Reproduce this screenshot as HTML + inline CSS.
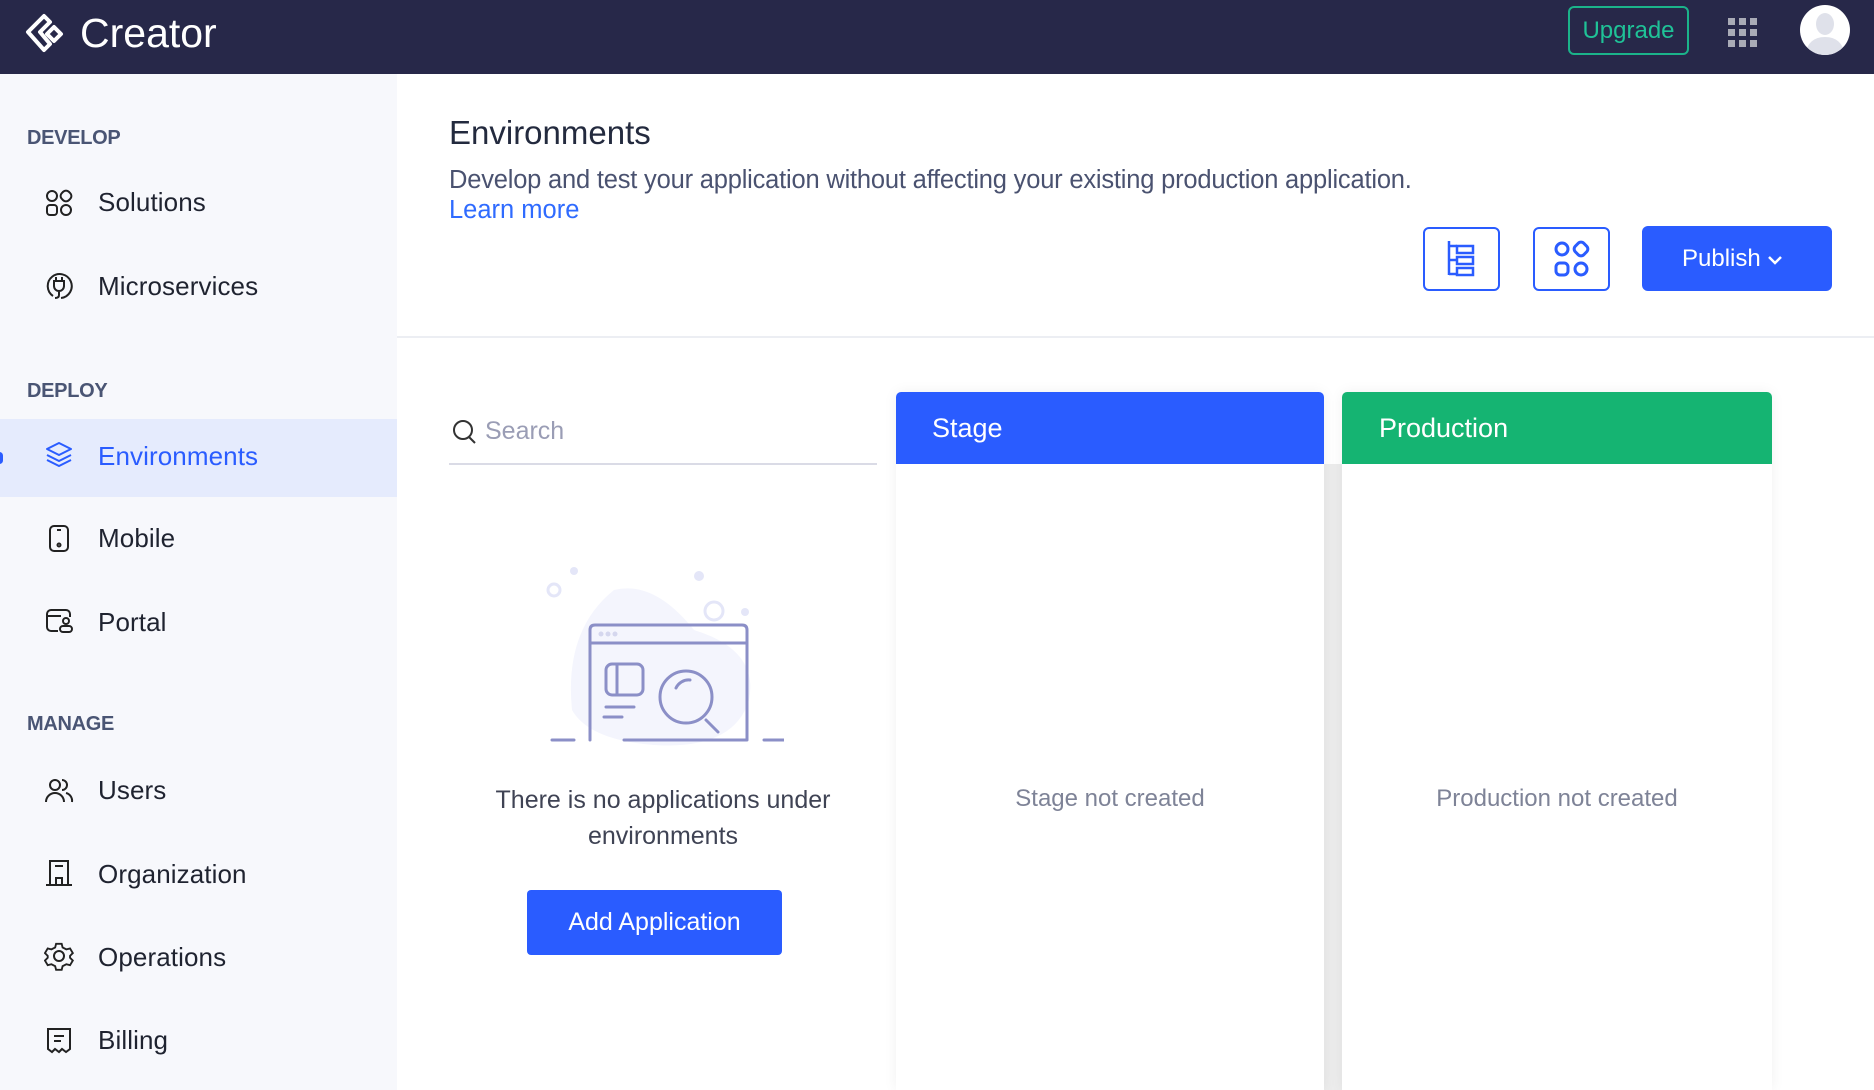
<!DOCTYPE html>
<html><head><meta charset="utf-8">
<style>
*{margin:0;padding:0;box-sizing:border-box}
body{width:1874px;height:1090px;overflow:hidden;background:#fff;font-family:"Liberation Sans",sans-serif;position:relative}
.a{position:absolute}
.hdr{left:0;top:0;width:1874px;height:74px;background:#272849}
.side{left:0;top:74px;width:397px;height:1016px;background:#f7f8fc}
.sec{left:27px;font-size:20px;font-weight:bold;color:#4a5574;letter-spacing:-0.3px}
.it{left:98px;font-size:26px;color:#1f2330;letter-spacing:0.1px}
.ic{left:44px;width:30px;height:30px}
</style></head><body>
<div class="a hdr"></div>
<svg class="a" style="left:24px;top:12px" width="48" height="44" viewBox="0 0 48 44" fill="none" stroke="#fff" stroke-width="4" stroke-linejoin="round"><path d="M20 4 L4 20 L20 38 L26 32 L16 20 L26 10 Z"/><path d="M30 15 L37 22 L30 29 L23 22 Z"/></svg>
<div class="a" style="left:80px;top:10px;font-size:41px;color:#fff">Creator</div>
<div class="a" style="left:1568px;top:6px;width:121px;height:49px;border:2px solid #1bb38a;border-radius:6px;color:#1fc297;font-size:24px;text-align:center;line-height:45px">Upgrade</div>
<svg class="a" style="left:1728px;top:18px" width="29" height="29" viewBox="0 0 29 29" fill="#a9abb6"><rect x="0" y="0" width="7" height="7"/><rect x="11" y="0" width="7" height="7"/><rect x="22" y="0" width="7" height="7"/><rect x="0" y="11" width="7" height="7"/><rect x="11" y="11" width="7" height="7"/><rect x="22" y="11" width="7" height="7"/><rect x="0" y="22" width="7" height="7"/><rect x="11" y="22" width="7" height="7"/><rect x="22" y="22" width="7" height="7"/></svg>
<svg class="a" style="left:1800px;top:5px" width="50" height="50" viewBox="0 0 50 50"><circle cx="25" cy="25" r="25" fill="#fff"/><clipPath id="c"><circle cx="25" cy="25" r="25"/></clipPath><g clip-path="url(#c)" fill="#dfe1ea"><ellipse cx="25" cy="19" rx="9" ry="11"/><path d="M5 50 Q8 32 25 32 Q42 32 45 50Z"/></g></svg>

<div class="a side"></div>
<div class="a" style="left:0;top:419px;width:397px;height:78px;background:#e5ebfd"></div>
<div class="a" style="left:-4px;top:452px;width:7px;height:12px;border-radius:4px;background:#2a5cff"></div>
<div class="a sec" style="top:127px">DEVELOP</div>
<div class="a sec" style="top:380px">DEPLOY</div>
<div class="a sec" style="top:713px">MANAGE</div>
<div class="a it" style="top:187px">Solutions</div>
<div class="a it" style="top:271px">Microservices</div>
<div class="a it" style="top:441px;color:#2a5cff">Environments</div>
<div class="a it" style="top:523px">Mobile</div>
<div class="a it" style="top:607px">Portal</div>
<div class="a it" style="top:775px">Users</div>
<div class="a it" style="top:859px">Organization</div>
<div class="a it" style="top:942px">Operations</div>
<div class="a it" style="top:1025px">Billing</div>
<svg class="a ic" style="top:188px" viewBox="0 0 30 30" fill="none" stroke="#222" stroke-width="2"><circle cx="8" cy="8" r="5"/><rect x="17" y="3" width="10" height="10" rx="4" transform="rotate(45 22 8)"/><rect x="3" y="17" width="10" height="10" rx="3"/><circle cx="22" cy="22" r="5"/></svg>
<svg class="a ic" style="top:271px" viewBox="0 0 30 30" fill="none" stroke="#222" stroke-width="2"><path d="M17 27 A12 12 0 1 0 9 25"/><path d="M10 10v5a5 5 0 0 0 10 0v-5zM12 10V6M18 10V6M15 20v4q0 3-4 3"/></svg>
<svg class="a ic" style="top:440px" viewBox="0 0 30 30" fill="none" stroke="#2a5cff" stroke-width="2" stroke-linejoin="round"><path d="M15 3 L27 9 L15 15 L3 9 Z"/><path d="M3 15 L15 21 L27 15"/><path d="M3 20 L15 26 L27 20"/></svg>
<svg class="a ic" style="top:523px" viewBox="0 0 30 30" fill="none" stroke="#222" stroke-width="2"><rect x="6" y="3" width="18" height="25" rx="4"/><path d="M13 7h4"/><circle cx="15" cy="22" r="1.5"/></svg>
<svg class="a ic" style="top:606px" viewBox="0 0 30 30" fill="none" stroke="#222" stroke-width="2"><path d="M14 25H7a4 4 0 0 1-4-4V8a4 4 0 0 1 4-4h15a4 4 0 0 1 4 4v3M3 10h14"/><circle cx="22" cy="15" r="3"/><rect x="16" y="20" width="12" height="6" rx="3"/></svg>
<svg class="a ic" style="top:775px" viewBox="0 0 30 30" fill="none" stroke="#222" stroke-width="2"><circle cx="11" cy="10" r="5"/><path d="M2 27a9 9 0 0 1 18 0"/><path d="M18 5a5 5 0 0 1 0 10M22 18a8 8 0 0 1 6 9"/></svg>
<svg class="a ic" style="top:858px" viewBox="0 0 30 30" fill="none" stroke="#222" stroke-width="2"><path d="M6 27V3h18v24M2 27h26M11 8h8M12 27v-7h6v7"/></svg>
<svg class="a ic" style="top:941px" viewBox="0 0 30 30" fill="none" stroke="#222" stroke-width="2"><path d="M12 3h6l1 4 4 2 4-1 3 5-3 3v2l3 3-3 5-4-1-4 2-1 4h-6l-1-4-4-2-4 1-3-5 3-3v-2l-3-3 3-5 4 1 4-2z" transform="scale(.93) translate(1 0)"/><circle cx="15" cy="15" r="5"/></svg>
<svg class="a ic" style="top:1025px" viewBox="0 0 30 30" fill="none" stroke="#222" stroke-width="2"><path d="M4 4h22v20l-4 3-4-3-3 3-4-3-3 3-4-3z"/><path d="M10 11h10M10 16h7"/></svg>

<div class="a" style="left:449px;top:114px;font-size:33px;color:#232a3e">Environments</div>
<div class="a" style="left:449px;top:166px;font-size:25.5px;color:#4a5270;letter-spacing:-0.2px">Develop and test your application without affecting your existing production application.</div>
<div class="a" style="left:449px;top:196px;font-size:25.5px;color:#2f6bff">Learn more</div>
<div class="a" style="left:1423px;top:227px;width:77px;height:64px;border:2px solid #2a5cff;border-radius:6px"></div>
<svg class="a" style="left:1446px;top:240px" width="32" height="38" viewBox="0 0 32 38" fill="none" stroke="#2a5cff" stroke-width="2.5"><path d="M3 1v34M3 6h8M3 20h8M3 34h8"/><rect x="11" y="6" width="16" height="7"/><rect x="11" y="17" width="16" height="7"/><rect x="11" y="28" width="16" height="7"/></svg>
<div class="a" style="left:1533px;top:227px;width:77px;height:64px;border:2px solid #2a5cff;border-radius:6px"></div>
<svg class="a" style="left:1553px;top:240px" width="38" height="38" viewBox="0 0 38 38" fill="none" stroke="#2a5cff" stroke-width="3"><circle cx="9" cy="9" r="6"/><rect x="22" y="3" width="12" height="12" rx="4" transform="rotate(45 28 9)"/><rect x="3" y="23" width="12" height="12" rx="4"/><circle cx="28" cy="29" r="6"/></svg>
<div class="a" style="left:1642px;top:226px;width:190px;height:65px;background:#2a5cff;border-radius:6px;color:#fff;font-size:24px;line-height:65px;padding-left:40px">Publish <svg width="16" height="12" viewBox="0 0 16 12" fill="none" stroke="#fff" stroke-width="2.5"><path d="M2 3l6 6 6-6"/></svg></div>
<div class="a" style="left:397px;top:336px;width:1477px;height:2px;background:#eceef3"></div>

<svg class="a" style="left:452px;top:419px" width="26" height="26" viewBox="0 0 26 26" fill="none" stroke="#333" stroke-width="2"><circle cx="11" cy="11" r="9"/><path d="M17 18l6 6"/></svg>
<div class="a" style="left:485px;top:417px;font-size:25px;color:#9a9db5">Search</div>
<div class="a" style="left:449px;top:463px;width:428px;height:2px;background:#dadbe6"></div>

<svg class="a" style="left:544px;top:560px" width="240" height="190" viewBox="0 0 240 190" fill="none">
<path d="M70 30 Q110 20 150 70 Q215 90 205 140 Q190 190 110 185 Q45 180 28 150 Q20 70 70 30Z" fill="#f4f5fd"/>
<circle cx="10" cy="30" r="6" stroke="#e4e6f8" stroke-width="3"/><circle cx="30" cy="11" r="4" fill="#e4e6f8"/><circle cx="155" cy="16" r="5" fill="#e4e6f8"/><circle cx="170" cy="51" r="9" stroke="#e4e6f8" stroke-width="3"/><circle cx="201" cy="52" r="4" fill="#e4e6f8"/>
<g stroke="#8b8fc7" stroke-width="3" stroke-linecap="round"><path d="M46 180V70q0-5 5-5h147q5 0 5 5v110M46 83h157M80 180h122M8 180h22M220 180h28"/><rect x="62" y="104" width="37" height="31" rx="6"/><path d="M73 104v31M62 147h28M60 157h18"/><circle cx="142" cy="137" r="26"/><path d="M132 128a14 14 0 0 1 14-8M162 160l12 12"/></g>
<g fill="#d5d7ee"><circle cx="57" cy="74" r="2.5"/><circle cx="64" cy="74" r="2.5"/><circle cx="71" cy="74" r="2.5"/></g></svg>
<div class="a" style="left:449px;top:782px;width:428px;text-align:center;font-size:25px;line-height:36px;color:#3f4354">There is no applications under<br>environments</div>
<div class="a" style="left:527px;top:890px;width:255px;height:65px;background:#2a5cff;border-radius:4px;color:#fff;font-size:25px;line-height:65px;text-align:center">Add Application</div>

<div class="a" style="left:1324px;top:464px;width:18px;height:626px;background:#ececec"></div>
<div class="a" style="left:896px;top:392px;width:428px;height:698px;background:#fff;border-radius:5px 5px 0 0;box-shadow:0 0 14px rgba(0,0,0,.06)"></div>
<div class="a" style="left:1342px;top:392px;width:430px;height:698px;background:#fff;border-radius:5px 5px 0 0;box-shadow:0 0 14px rgba(0,0,0,.06)"></div>
<div class="a" style="left:896px;top:392px;width:428px;height:72px;background:#2a5cff;border-radius:5px 5px 0 0;color:#fff;font-size:27px;line-height:72px;padding-left:36px">Stage</div>
<div class="a" style="left:1342px;top:392px;width:430px;height:72px;background:#15b472;border-radius:5px 5px 0 0;color:#fff;font-size:27px;line-height:72px;padding-left:37px">Production</div>
<div class="a" style="left:896px;top:785px;width:428px;text-align:center;font-size:24px;color:#7e8397">Stage not created</div>
<div class="a" style="left:1342px;top:785px;width:430px;text-align:center;font-size:24px;color:#7e8397">Production not created</div>
</body></html>
